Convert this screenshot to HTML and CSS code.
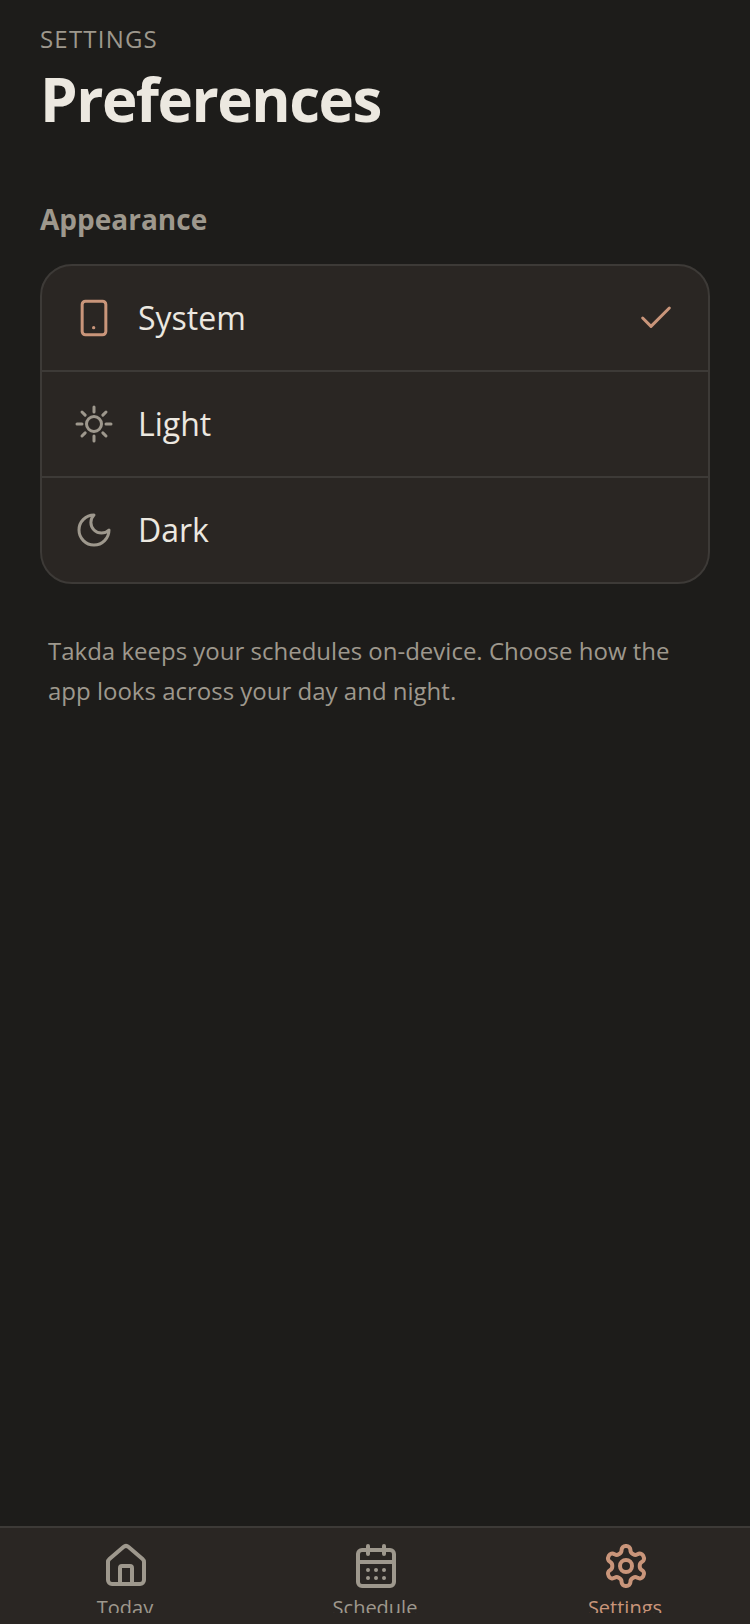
FILE: index.html
```html
<!DOCTYPE html>
<html lang="en">
<head>
    <meta charset="UTF-8">
    <meta name="viewport" content="width=device-width, initial-scale=1.0">
    <link rel="stylesheet" href="styles.css">
    <title>Preferences</title>
</head>
<body>
    <div class="screen">
        <main class="content">
            <header class="page-head">
                <div class="eyebrow">SETTINGS</div>
                <h1 class="page-title">Preferences</h1>
            </header>

            <h2 class="section-title">Appearance</h2>
            <div class="options">
                <div class="option">
                    <svg class="option-icon accent" viewBox="0 0 24 24">
                        <rect x="4.900" y="1.900" width="14.200" height="20.200" rx="2"/>
                        <circle class="dot" cx="11.800" cy="17.800" r="1"/>
                    </svg>
                    <span class="option-label">System</span>
                    <svg class="check" viewBox="0 0 24 24">
                        <path d="M20 6 9 17l-5-5"/>
                    </svg>
                </div>
                <div class="option">
                    <svg class="option-icon muted" viewBox="0 0 24 24">
                        <circle cx="12" cy="12" r="4.500"/>
                        <path d="M12 1.800v3M12 19.200v3M1.800 12h3M19.200 12h3M4.800 4.800l1.900 1.900M17.300 17.300l1.900 1.900M4.800 19.200l1.900-1.900M17.300 6.700l1.900-1.900"/>
                    </svg>
                    <span class="option-label">Light</span>
                </div>
                <div class="option">
                    <svg class="option-icon muted" viewBox="0 0 24 24">
                        <path d="M12 3a6 6 0 0 0 9 9 9 9 0 1 1-9-9Z"/>
                    </svg>
                    <span class="option-label">Dark</span>
                </div>
            </div>

            <p class="note">Takda keeps your schedules on-device. Choose how the app looks across your day and night.</p>
        </main>

        <nav class="tabbar">
            <div class="tab">
                <svg class="tab-icon" viewBox="0 0 24 24">
                    <path d="M15 21v-8a1 1 0 0 0-1-1h-4a1 1 0 0 0-1 1v8"/>
                    <path d="M3 10a2 2 0 0 1 .709-1.528l7-5.999a2 2 0 0 1 2.582 0l7 5.999A2 2 0 0 1 21 10v9a2 2 0 0 1-2 2H5a2 2 0 0 1-2-2z"/>
                </svg>
                <span class="tab-label">Today</span>
            </div>
            <div class="tab">
                <svg class="tab-icon" viewBox="0 0 24 24">
                    <path d="M8 2v4M16 2v4"/>
                    <rect x="3" y="4" width="18" height="18" rx="2"/>
                    <path d="M3 10h18M8 14h.01M12 14h.01M16 14h.01M8 18h.01M12 18h.01M16 18h.01"/>
                </svg>
                <span class="tab-label">Schedule</span>
            </div>
            <div class="tab active">
                <svg class="tab-icon" viewBox="0 0 24 24">
                    <path d="M12.220 2h-.44a2 2 0 0 0-2 2v.18a2 2 0 0 1-1 1.730l-.43.25a2 2 0 0 1-2 0l-.15-.08a2 2 0 0 0-2.730.73l-.22.38a2 2 0 0 0 .73 2.730l.15.1a2 2 0 0 1 1 1.720v.51a2 2 0 0 1-1 1.740l-.15.09a2 2 0 0 0-.73 2.730l.22.38a2 2 0 0 0 2.730.73l.15-.08a2 2 0 0 1 2 0l.43.25a2 2 0 0 1 1 1.730V20a2 2 0 0 0 2 2h.44a2 2 0 0 0 2-2v-.18a2 2 0 0 1 1-1.730l.43-.25a2 2 0 0 1 2 0l.15.08a2 2 0 0 0 2.730-.73l.22-.39a2 2 0 0 0-.73-2.730l-.15-.08a2 2 0 0 1-1-1.740v-.5a2 2 0 0 1 1-1.740l.15-.09a2 2 0 0 0 .73-2.730l-.22-.38a2 2 0 0 0-2.730-.73l-.15.08a2 2 0 0 1-2 0l-.43-.25a2 2 0 0 1-1-1.730V4a2 2 0 0 0-2-2z"/>
                    <circle cx="12" cy="12" r="3"/>
                </svg>
                <span class="tab-label">Settings</span>
            </div>
        </nav>
    </div>
</body>
</html>
```

FILE: styles.css
```css
*{
    box-sizing: border-box;
}

html, body{
    height: 100%;
}

body{
    margin: 0;
    background-color: #1d1c1a;
    font-family: "Open Sans", sans-serif;
}

.screen{
    display: flex;
    flex-direction: column;
    height: 1624px;
    overflow: hidden;
}

.content{
    flex: 1;
    padding: 21px 40px 0;
}

.eyebrow{
    font-size: 24px;
    line-height: 36px;
    letter-spacing: 1.2px;
    color: #9e988d;
}

.page-title{
    margin: 2px 0 0;
    font-size: 60px;
    line-height: 80px;
    font-weight: 700;
    letter-spacing: -1.5px;
    color: #ece8e0;
}

.section-title{
    margin: 60px 0 25px;
    font-size: 28px;
    line-height: 40px;
    font-weight: 700;
    color: #9e988d;
}

.options{
    background-color: #2a2623;
    border: 2px solid #3d3a37;
    border-radius: 32px;
}

.option{
    display: flex;
    align-items: center;
    gap: 24px;
    height: 106px;
    padding: 0 32px;
    border-bottom: 2px solid #3d3a37;
}

.option:last-child{
    height: 104px;
    border-bottom: none;
}

.option-icon{
    flex: none;
    width: 40px;
    height: 40px;
    fill: none;
    stroke-width: 1.800;
    stroke-linecap: round;
    stroke-linejoin: round;
}

.option-icon.accent{
    stroke: #c9957a;
}

.option-icon.muted{
    stroke: #9e988d;
}

.dot{
    fill: #c9957a;
    stroke: none;
}

.option-label{
    flex: 1;
    padding-bottom: 2px;
    font-size: 32px;
    color: #ece8e0;
}

.check{
    flex: none;
    width: 40px;
    height: 40px;
    fill: none;
    stroke: #c9957a;
    stroke-width: 1.800;
    stroke-linecap: round;
    stroke-linejoin: round;
}

.note{
    margin: 47px 8px 0;
    font-size: 24px;
    line-height: 40px;
    color: #9e988d;
}

.tabbar{
    display: grid;
    grid-template-columns: repeat(3, 1fr);
    height: 98px;
    background-color: #2a2623;
    border-top: 2px solid #3d3a37;
}

.tab{
    display: flex;
    flex-direction: column;
    align-items: center;
    height: 85px;
    padding-top: 14px;
    overflow: hidden;
    color: #9e988d;
}

.tab.active{
    color: #c9957a;
}

.tab-icon{
    flex: none;
    width: 48px;
    height: 48px;
    margin-left: 2px;
    fill: none;
    stroke: currentColor;
    stroke-width: 2;
    stroke-linecap: round;
    stroke-linejoin: round;
}

.tab-label{
    margin-top: 6px;
    font-size: 20px;
    line-height: 24px;
}
```
